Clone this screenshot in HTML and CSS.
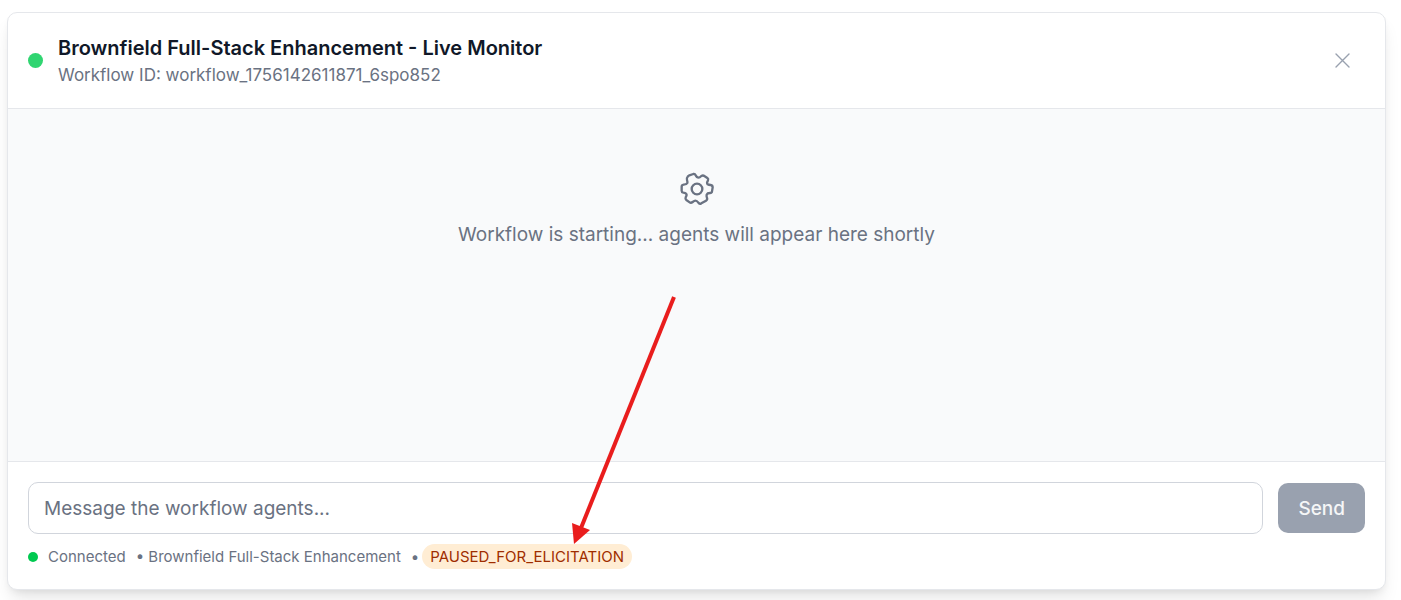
FILE: index.html
```html
<!DOCTYPE html>
<html lang="en">
<head>
<meta charset="utf-8">
<title>Live Monitor</title>
<link rel="stylesheet" href="styles.css">
</head>
<body>
<section class="monitor">
  <header class="monitor-header">
    <span class="live-dot"></span>
    <div class="heading">
      <h1 class="title">Brownfield Full-Stack Enhancement - Live Monitor</h1>
      <p class="workflow-id">Workflow ID: workflow_1756142611871_6spo852</p>
    </div>
    <button class="close" type="button" aria-label="Close">
      <svg width="15" height="15" viewBox="0 0 15 15" fill="none" stroke="currentColor" stroke-width="1.4" stroke-linecap="round"><path d="M1 1 14 14M14 1 1 14"/></svg>
    </button>
  </header>
  <main class="activity">
    <svg class="gear" width="34" height="34" viewBox="60 36 102 102" fill="none" stroke="currentColor" stroke-width="7" stroke-linejoin="round">
      <path d="M88 46 L100 42 Q105 41 107 46 Q110 53 116 53 Q119 53 124 48 Q129 45 133 48 L142 54 Q146 57 144 61 Q139 69 143 73 Q146 75 152 75 Q158 76 158 82 L156 94 Q156 99 150 99 Q142 99 140 104 Q139 108 141 114 Q143 119 138 122 L124 130 Q118 133 115 128 Q111 122 106 122 Q103 122 98 126 Q93 130 89 127 L79 120 Q75 117 77 112 Q82 104 78 101 Q76 99 70 98 Q65 97 65 92 L65 80 Q65 75 71 74 Q80 73 82 69 Q83 66 81 60 Q79 55 83 50 Q85 47 88 46Z"/>
      <circle cx="111" cy="87" r="16"/>
    </svg>
    <p class="activity-text">Workflow is starting... agents will appear here shortly</p>
  </main>
  <footer class="composer">
    <form class="message-form">
      <input class="message" type="text" aria-label="Message" placeholder="Message the workflow agents...">
      <button class="send" type="button">Send</button>
    </form>
    <div class="status">
      <span class="status-dot"></span>
      <span class="connection">Connected</span>
      <span class="workflow-name">• Brownfield Full-Stack Enhancement</span>
      <span class="bullet">•</span>
      <span class="badge">PAUSED_FOR_ELICITATION
        <svg class="arrow" width="106" height="249" viewBox="0 0 106 249" aria-hidden="true"><path d="M103 1 10 232" stroke="#e91d1d" stroke-width="4"/><path d="M1 227 19 234 3 248Z" fill="#e91d1d"/></svg>
      </span>
    </div>
  </footer>
</section>
</body>
</html>
```
FILE: styles.css
```css
* { box-sizing: border-box; }
body {
  margin: 0;
  padding: 12px 15px 10px 7px;
  min-height: 100vh;
  display: flex;
  background: #fff;
  color: #6a7282;
  font-family: Inter, "Liberation Sans", sans-serif;
}
h1, p { margin: 0; }
button, input { font: inherit; }
.monitor {
  flex: 1;
  min-width: 0;
  display: flex;
  flex-direction: column;
  background: #fff;
  border: 1px solid #e5e7eb;
  border-radius: 10px;
  box-shadow: 0 12px 18px -4px rgba(0, 0, 0, 0.1), 0 4px 8px -4px rgba(0, 0, 0, 0.1);
}
.monitor-header {
  display: flex;
  align-items: center;
  gap: 15px;
  padding: 20px;
  border-bottom: 1px solid #e5e7eb;
}
.live-dot {
  width: 15px;
  height: 15px;
  border-radius: 50%;
  background: #30d571;
}
.heading { flex: 1; }
.title {
  color: #101828;
  font-size: 20px;
  font-weight: 600;
  line-height: 30px;
}
.workflow-id { font-size: 17px; line-height: 25px; }
.close {
  display: flex;
  padding: 15px;
  border: 0;
  background: none;
  color: #99a1af;
}
.activity {
  flex: 1;
  display: flex;
  flex-direction: column;
  align-items: center;
  gap: 14px;
  padding: 63px 20px;
  background: #f9fafb;
}
.activity-text { font-size: 19px; line-height: 30px; }
.composer {
  padding: 20px;
  border-top: 1px solid #e5e7eb;
}
.message-form { display: flex; align-items: center; gap: 15px; }
.message {
  flex: 1;
  min-width: 0;
  height: 52px;
  padding: 0 15px;
  border: 1px solid #d1d5dc;
  border-radius: 10px;
  background: #fff;
  font-size: 19px;
}
.message::placeholder { color: #6a7282; opacity: 1; }
.send {
  height: 50px;
  padding: 0 20px;
  border: 0;
  border-radius: 10px;
  background: #99a1af;
  color: #f5f6f7;
  font-size: 19px;
  font-weight: 500;
}
.status {
  display: flex;
  align-items: center;
  margin-top: 10px;
  font-size: 15px;
  line-height: 25px;
}
.status-dot {
  width: 10px;
  height: 10px;
  margin-right: 10px;
  border-radius: 50%;
  background: #00c950;
}
.connection, .workflow-name { margin-right: 10px; }
.bullet { margin-right: 3px; }
.badge {
  position: relative;
  padding: 0 8px;
  border-radius: 13px;
  background: #ffedd4;
  color: #9f2d00;
}
.arrow { position: absolute; left: 149px; bottom: 24px; }
```
